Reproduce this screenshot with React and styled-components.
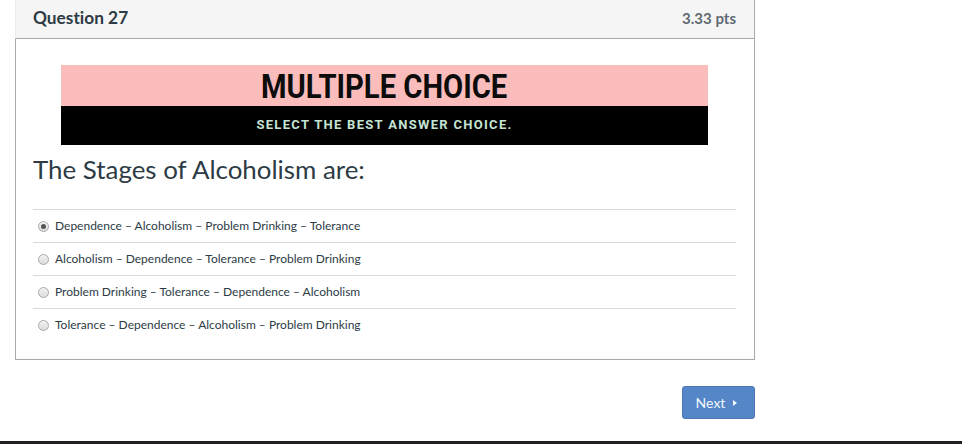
import React from "react";
import styled, { createGlobalStyle } from "styled-components";

const Global = createGlobalStyle`
  html, body { margin: 0; padding: 0; background: #fff; }
  body {
    font-family: Lato, "Open Sans", sans-serif;
    color: #2d3b45;
    font-variant-ligatures: none;
  }
`;

const Page = styled.div`
  width: 962px;
  height: 444px;
  display: flex;
  flex-direction: column;
  box-sizing: border-box;
  overflow: hidden;
`;

const Main = styled.div`
  flex: 1;
  padding-left: 15px;
  width: 740px;
`;

const Header = styled.div`
  height: 39px;
  box-sizing: border-box;
  background: #f5f5f5;
  border-left: 1px solid #ececec;
  border-right: 1px solid #a8a8a8;
  border-bottom: 1px solid #a8a8a8;
  display: flex;
  align-items: center;
  justify-content: space-between;
  padding: 0 18px 3px 17px;
`;

const Title = styled.span`
  font-weight: 700;
  font-size: 17.3px;
  color: #2d3b45;
`;

const Points = styled.span`
  font-weight: 700;
  font-size: 15px;
  color: #5f6a72;
`;

const Body = styled.div`
  border: 1px solid #a8a8a8;
  border-top: none;
  padding: 26px 18px 18px 17px;
`;

const Banner = styled.div`
  width: 647px;
  margin: 0 auto;
  display: flex;
  flex-direction: column;
`;

const BannerTop = styled.div`
  height: 41px;
  background: #fbbcbc;
  display: flex;
  align-items: center;
  justify-content: center;
`;

const BannerTitle = styled.span`
  font-family: Roboto, "Liberation Sans", sans-serif;
  font-weight: 700;
  font-size: 33px;
  color: #0c0c0c;
  display: inline-block;
  transform: scaleX(0.885);
  margin-top: 2px;
`;

const BannerBottom = styled.div`
  height: 39px;
  background: #000;
  display: flex;
  align-items: center;
  justify-content: center;
`;

const BannerSub = styled.span`
  font-family: Roboto, "Liberation Sans", sans-serif;
  font-weight: 700;
  font-size: 13px;
  letter-spacing: 1.3px;
  color: #c5e4d4;
  margin-top: -2px;
`;

const Question = styled.div`
  font-size: 25.9px;
  font-weight: 400;
  color: #2d3b45;
  line-height: 34px;
  margin: 7px 0 23px 0;
`;

const Answers = styled.div`
  display: flex;
  flex-direction: column;
`;

const Row = styled.label`
  height: 33px;
  box-sizing: border-box;
  border-top: 1px solid #dadada;
  display: flex;
  align-items: center;
  gap: 6px;
  padding-left: 5px;
  padding-bottom: 2px;
  font-size: 12px;
  color: #2d3b45;
`;

const Radio = styled.span`
  width: 11px;
  height: 11px;
  box-sizing: border-box;
  border-radius: 50%;
  border: 1px solid #a9a9a9;
  background: linear-gradient(#f2f2f2, #dcdcdc);
  display: flex;
  align-items: center;
  justify-content: center;
  margin-top: 2px;
  &::after {
    content: "";
    width: 5px;
    height: 5px;
    border-radius: 50%;
    background: ${(p) => (p.$checked ? "#555" : "transparent")};
  }
`;

const Footer = styled.div`
  display: flex;
  justify-content: flex-end;
  padding-top: 26px;
`;

const NextButton = styled.button`
  width: 73px;
  height: 33px;
  background: #5586c8;
  border: 1px solid #4a78b8;
  border-radius: 3px;
  color: #f4f8fc;
  font-family: Lato, sans-serif;
  font-size: 14px;
  display: flex;
  align-items: center;
  justify-content: center;
  gap: 8px;
  padding: 0 4px 0 0;
`;

const Caret = styled.span`
  width: 0;
  height: 0;
  border-top: 3px solid transparent;
  border-bottom: 3px solid transparent;
  border-left: 4px solid #f4f8fc;
  margin-top: 1px;
`;

const BottomBar = styled.div`
  height: 3px;
  background: #231f1f;
`;

const answers = [
  "Dependence – Alcoholism – Problem Drinking – Tolerance",
  "Alcoholism – Dependence – Tolerance – Problem Drinking",
  "Problem Drinking – Tolerance – Dependence – Alcoholism",
  "Tolerance – Dependence – Alcoholism – Problem Drinking",
];

export default function App() {
  return (
    <Page>
      <Global />
      <Main>
        <Header>
          <Title>Question 27</Title>
          <Points>3.33 pts</Points>
        </Header>
        <Body>
          <Banner>
            <BannerTop>
              <BannerTitle>MULTIPLE CHOICE</BannerTitle>
            </BannerTop>
            <BannerBottom>
              <BannerSub>SELECT THE BEST ANSWER CHOICE.</BannerSub>
            </BannerBottom>
          </Banner>
          <Question>The Stages of Alcoholism are:</Question>
          <Answers>
            {answers.map((a, i) => (
              <Row key={i}>
                <Radio $checked={i === 0} />
                {a}
              </Row>
            ))}
          </Answers>
        </Body>
        <Footer>
          <NextButton>
            Next
            <Caret />
          </NextButton>
        </Footer>
      </Main>
      <BottomBar />
    </Page>
  );
}
